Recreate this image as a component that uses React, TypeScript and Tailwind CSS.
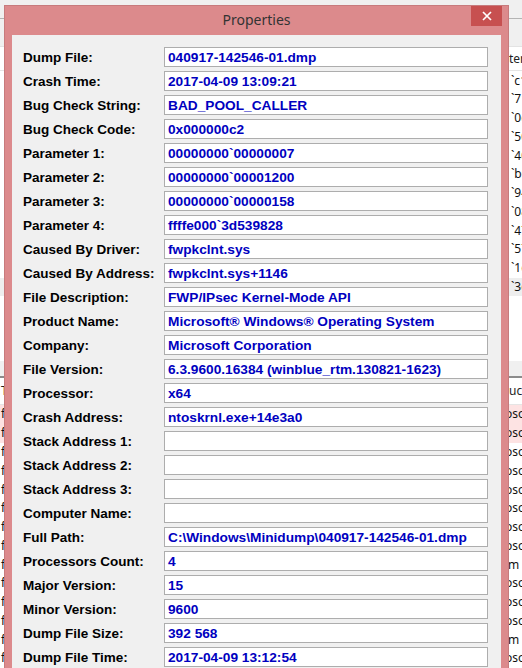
import React from "react";

const rows: [string, string][] = [
  ["Dump File:", "040917-142546-01.dmp"],
  ["Crash Time:", "2017-04-09 13:09:21"],
  ["Bug Check String:", "BAD_POOL_CALLER"],
  ["Bug Check Code:", "0x000000c2"],
  ["Parameter 1:", "00000000`00000007"],
  ["Parameter 2:", "00000000`00001200"],
  ["Parameter 3:", "00000000`00000158"],
  ["Parameter 4:", "ffffe000`3d539828"],
  ["Caused By Driver:", "fwpkclnt.sys"],
  ["Caused By Address:", "fwpkclnt.sys+1146"],
  ["File Description:", "FWP/IPsec Kernel-Mode API"],
  ["Product Name:", "Microsoft® Windows® Operating System"],
  ["Company:", "Microsoft Corporation"],
  ["File Version:", "6.3.9600.16384 (winblue_rtm.130821-1623)"],
  ["Processor:", "x64"],
  ["Crash Address:", "ntoskrnl.exe+14e3a0"],
  ["Stack Address 1:", ""],
  ["Stack Address 2:", ""],
  ["Stack Address 3:", ""],
  ["Computer Name:", ""],
  ["Full Path:", "C:\\Windows\\Minidump\\040917-142546-01.dmp"],
  ["Processors Count:", "4"],
  ["Major Version:", "15"],
  ["Minor Version:", "9600"],
  ["Dump File Size:", "392 568"],
  ["Dump File Time:", "2017-04-09 13:12:54"],
];

const upperRight = ["`c1", "`71", "`0c", "`50", "`40", "`b0", "`94", "`08", "`47", "`57", "`1c", "`3c"];
const lowerRight = ["oso", "oso", "oso", "oso", "oso", "oso", "oso", "oso", "m", "oso", "oso", "oso", "m", "oso"];

function BgRow({ left, right, cls, rightCls }: { left?: string; right: React.ReactNode; cls?: string; rightCls?: string }) {
  return (
    <div className={`flex h-[19px] items-center justify-between text-[12px] text-[#111] ${cls ?? ""}`}>
      <span className="pl-[1px] leading-none">{left}</span>
      <span className={`overflow-hidden whitespace-nowrap leading-none ${rightCls ?? "w-[13px] pl-[2px]"}`}>{right}</span>
    </div>
  );
}

export default function App() {
  return (
    <div className="relative h-[668px] w-[522px] overflow-hidden bg-white font-['Noto_Sans',sans-serif]">
      {/* background window */}
      <div className="flex h-full flex-col">
        <div className="h-[19px] border-b border-[#b4b4b4] bg-[#f0f0f0]" />
        <div className="h-[29px] border-b border-[#e3e3e3] bg-[#f0f0f0]" />
        <div className="flex h-[24px] items-center justify-end border-b border-[#e5e5e5] text-[12px] text-[#222]">
          <span className="w-[13px] overflow-hidden whitespace-nowrap pl-0 leading-none">ter</span>
        </div>
        {upperRight.map((t, i) => (
          <BgRow key={i} right={t} cls={i === 11 ? "bg-[#eeeeee]" : ""} />
        ))}
        <div className="h-[65px]" />
        <div className="h-[18px] border-b-2 border-[#8c8c8c] bg-[#f0f0f0]" />
        <div className="flex h-[27px] items-center justify-between border-b border-[#e5e5e5] text-[12px] text-[#222]">
          <span className="pl-[1px] leading-none">T</span>
          <span className="w-[13px] overflow-hidden whitespace-nowrap leading-none">uct</span>
        </div>
        {lowerRight.map((t, i) => (
          <BgRow
            key={i}
            left="f"
            cls={i < 2 ? "bg-[#fde3e3]" : ""}
            rightCls="w-[17px]"
            right={
              t === "m" ? (
                <span className="pl-[3px]">
                  m <span className="text-[#e6c46a]">·</span>
                </span>
              ) : (
                t
              )
            }
          />
        ))}
      </div>

      {/* dialog */}
      <div className="absolute left-[4px] top-[5px] flex h-[700px] w-[505px] flex-col border border-[#c77b7d] bg-[#dc8a8c]">
        <div className="relative flex h-[29px] shrink-0 items-center justify-center">
          <span className="pb-[1px] text-[14px] leading-none text-[#333333]">Properties</span>
          <div className="absolute right-[6px] top-0 flex h-[20px] w-[31px] items-center justify-center bg-[#c75050]">
            <svg width="10" height="10" viewBox="0 0 10 10">
              <path d="M1 1 L9 9 M9 1 L1 9" stroke="white" strokeWidth="1.7" />
            </svg>
          </div>
        </div>
        <div className="mx-[7px] flex flex-1 flex-col gap-[4px] bg-[#f0f0f0] pl-[11px] pt-[12px] font-['Liberation_Sans',Arial,sans-serif] font-bold">
          {rows.map(([label, value]) => (
            <div key={label} className="flex h-[20px] items-center">
              <div className="w-[141px] whitespace-nowrap pt-[1px] text-[13.5px] leading-none text-black">{label}</div>
              <div className="flex h-[20px] w-[324px] items-center overflow-hidden whitespace-nowrap border border-[#adadad] bg-white pl-[3px] pt-[1px] text-[13.7px] leading-none text-[#0000c0]">
                {value}
              </div>
            </div>
          ))}
        </div>
      </div>
    </div>
  );
}
